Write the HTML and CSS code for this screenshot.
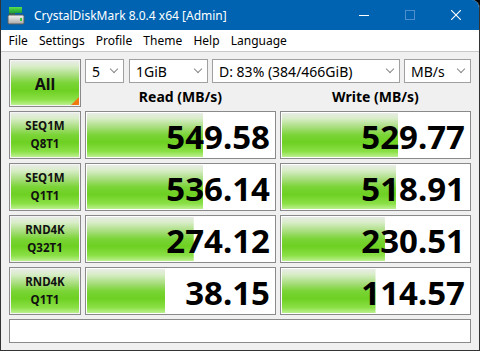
FILE: index.html
```html
<!DOCTYPE html>
<html lang="en">

<head>
    <meta charset="UTF-8">
    <meta name="viewport" content="width=device-width, initial-scale=1.0">
    <title>CrystalDiskMark</title>
    <link rel="stylesheet" href="styles.css">
</head>

<body>
    <div class="window">
        <div class="titlebar">
            <svg class="app-icon" width="18" height="20" viewBox="0 0 18 20">
                <defs>
                    <linearGradient id="g1" x1="0" y1="0" x2="0" y2="1">
                        <stop offset="0" stop-color="#5be24a" />
                        <stop offset="1" stop-color="#1c9b3a" />
                    </linearGradient>
                    <linearGradient id="g2" x1="0" y1="0" x2="0" y2="1">
                        <stop offset="0" stop-color="#f4f4f4" />
                        <stop offset="1" stop-color="#a9a9a9" />
                    </linearGradient>
                </defs>
                <rect x="2" y="1" width="13" height="6" fill="url(#g1)" />
                <rect x="2" y="7" width="6" height="2" fill="#2f6d4a" />
                <rect x="1" y="9" width="16" height="9" rx="1.5" fill="url(#g2)" stroke="#5a5a5a" stroke-width="1" />
                <rect x="13" y="12" width="2" height="3" fill="#3cc83c" />
            </svg>
            <span class="title">CrystalDiskMark 8.0.4 x64 [Admin]</span>
            <div class="controls">
                <span class="ctl">
                    <svg width="10" height="10" viewBox="0 0 10 10"><path d="M0 5.5H10" stroke="#fff" stroke-width="1" /></svg>
                </span>
                <span class="ctl">
                    <svg width="10" height="10" viewBox="0 0 10 10"><rect x="0.5" y="0.5" width="9" height="9" fill="none" stroke="#4d8fcc" stroke-width="1" /></svg>
                </span>
                <span class="ctl">
                    <svg width="10" height="10" viewBox="0 0 10 10"><path d="M0 0L10 10M10 0L0 10" stroke="#fff" stroke-width="1.1" /></svg>
                </span>
            </div>
        </div>

        <div class="menubar">
            <span class="menu-item">File</span>
            <span class="menu-item">Settings</span>
            <span class="menu-item">Profile</span>
            <span class="menu-item">Theme</span>
            <span class="menu-item">Help</span>
            <span class="menu-item">Language</span>
        </div>

        <div class="main">
            <div class="top">
                <div class="btn all">All<span class="corner"></span></div>
                <div class="selects">
                    <div class="select count">5<span class="chev"></span></div>
                    <div class="select size">1GiB<span class="chev"></span></div>
                    <div class="select drive">D: 83% (384/466GiB)<span class="chev"></span></div>
                    <div class="select unit">MB/s<span class="chev"></span></div>
                </div>
                <div class="head">Read (MB/s)</div>
                <div class="head">Write (MB/s)</div>
            </div>

            <div class="rows">
                <div class="btn label">SEQ1M<br>Q8T1</div>
                <div class="value" style="--w: 62%">549.58</div>
                <div class="value" style="--w: 62%">529.77</div>

                <div class="btn label">SEQ1M<br>Q1T1</div>
                <div class="value" style="--w: 62%">536.14</div>
                <div class="value" style="--w: 61%">518.91</div>

                <div class="btn label">RND4K<br>Q32T1</div>
                <div class="value" style="--w: 57%">274.12</div>
                <div class="value" style="--w: 55%">230.51</div>

                <div class="btn label">RND4K<br>Q1T1</div>
                <div class="value" style="--w: 42%">38.15</div>
                <div class="value" style="--w: 50%">114.57</div>
            </div>

            <div class="comment"></div>
        </div>
    </div>
</body>

</html>
```

FILE: styles.css
```css
html,
body {
    margin: 0;
    background: #000;
}

body {
    font-family: "Noto Sans", sans-serif;
    color: #000;
}

.window {
    width: 480px;
    height: 351px;
    box-sizing: border-box;
    border: 1px solid #333;
    border-top: none;
    border-top-right-radius: 8px;
    background: #f0f0f0;
    overflow: hidden;
}

.titlebar {
    height: 30px;
    background: #0063b1;
    display: flex;
    align-items: center;
    color: #fff;
}

.app-icon {
    margin-left: 6px;
    margin-top: 1px;
}

.title {
    margin-left: 9px;
    font-size: 12px;
}

.controls {
    margin-left: auto;
    display: flex;
    height: 30px;
}

.ctl {
    width: 46px;
    display: flex;
    align-items: center;
    justify-content: center;
}

.menubar {
    height: 21px;
    background: #fff;
    border-bottom: 1px solid #c8c8c8;
    display: flex;
    align-items: center;
    padding-left: 2px;
    font-size: 12px;
}

.menu-item {
    padding: 0 5.6px;
}

.main {
    padding: 7px 8px 0 8px;
}

.top {
    display: grid;
    grid-template-columns: 72px 191px 191px;
    grid-template-rows: 24px 24px;
    column-gap: 4px;
}

.btn {
    box-sizing: border-box;
    border: 1px solid #8a8a8a;
    box-shadow: inset 0 0 0 1px #f4f4f4;
    background: linear-gradient(to bottom, #ececec 0%, #d8edc8 14%, #a6dd7a 34%, #7ad436 50%, #6ed022 66%, #8ae046 86%, #c6f39e 100%);
    display: flex;
    align-items: center;
    justify-content: center;
    text-align: center;
    font-weight: bold;
    color: #111;
}

.all {
    grid-row: 1 / 3;
    position: relative;
    font-size: 16px;
    padding-top: 2px;
}

.corner {
    position: absolute;
    right: 1px;
    bottom: 1px;
    width: 0;
    height: 0;
    border-left: 8px solid transparent;
    border-bottom: 8px solid #f07a10;
}

.selects {
    grid-column: 2 / 4;
    display: flex;
    gap: 4px;
}

.select {
    box-sizing: border-box;
    height: 24px;
    border: 1px solid #a0a0a0;
    background: #fff;
    display: flex;
    align-items: center;
    padding-left: 6px;
    font-size: 14px;
    position: relative;
}

.chev {
    margin-left: auto;
    margin-right: 6px;
    width: 5px;
    height: 5px;
    border-right: 1px solid #888;
    border-bottom: 1px solid #888;
    transform: rotate(45deg);
    margin-top: -4px;
}

.count {
    width: 39px;
    margin-right: 1px;
}

.size {
    width: 79px;
}

.drive {
    width: 188px;
}

.unit {
    width: 67px;
}

.head {
    display: flex;
    align-items: flex-end;
    justify-content: center;
    font-size: 14px;
    font-weight: bold;
    line-height: 18px;
    padding-bottom: 1px;
}

.rows {
    margin-top: 4px;
    display: grid;
    grid-template-columns: 72px 191px 191px;
    grid-auto-rows: 48px;
    gap: 4px;
}

.label {
    font-size: 11.5px;
    line-height: 18px;
}

.value {
    box-sizing: border-box;
    border: 1px solid #8a8a8a;
    box-shadow: inset 0 0 0 1px #fff;
    background-color: #fff;
    background-image: linear-gradient(to bottom, #ececec 0%, #d8edc8 14%, #a6dd7a 34%, #7ad436 50%, #6ed022 66%, #8ae046 86%, #c6f39e 100%);
    background-repeat: no-repeat;
    background-size: var(--w) 100%;
    display: flex;
    align-items: center;
    justify-content: flex-end;
    padding-right: 5px;
    padding-top: 2px;
    font-size: 33px;
    font-weight: bold;
}

.comment {
    box-sizing: border-box;
    margin-top: 4px;
    height: 24px;
    border: 1px solid #8a8a8a;
    background: #fff;
}
```
